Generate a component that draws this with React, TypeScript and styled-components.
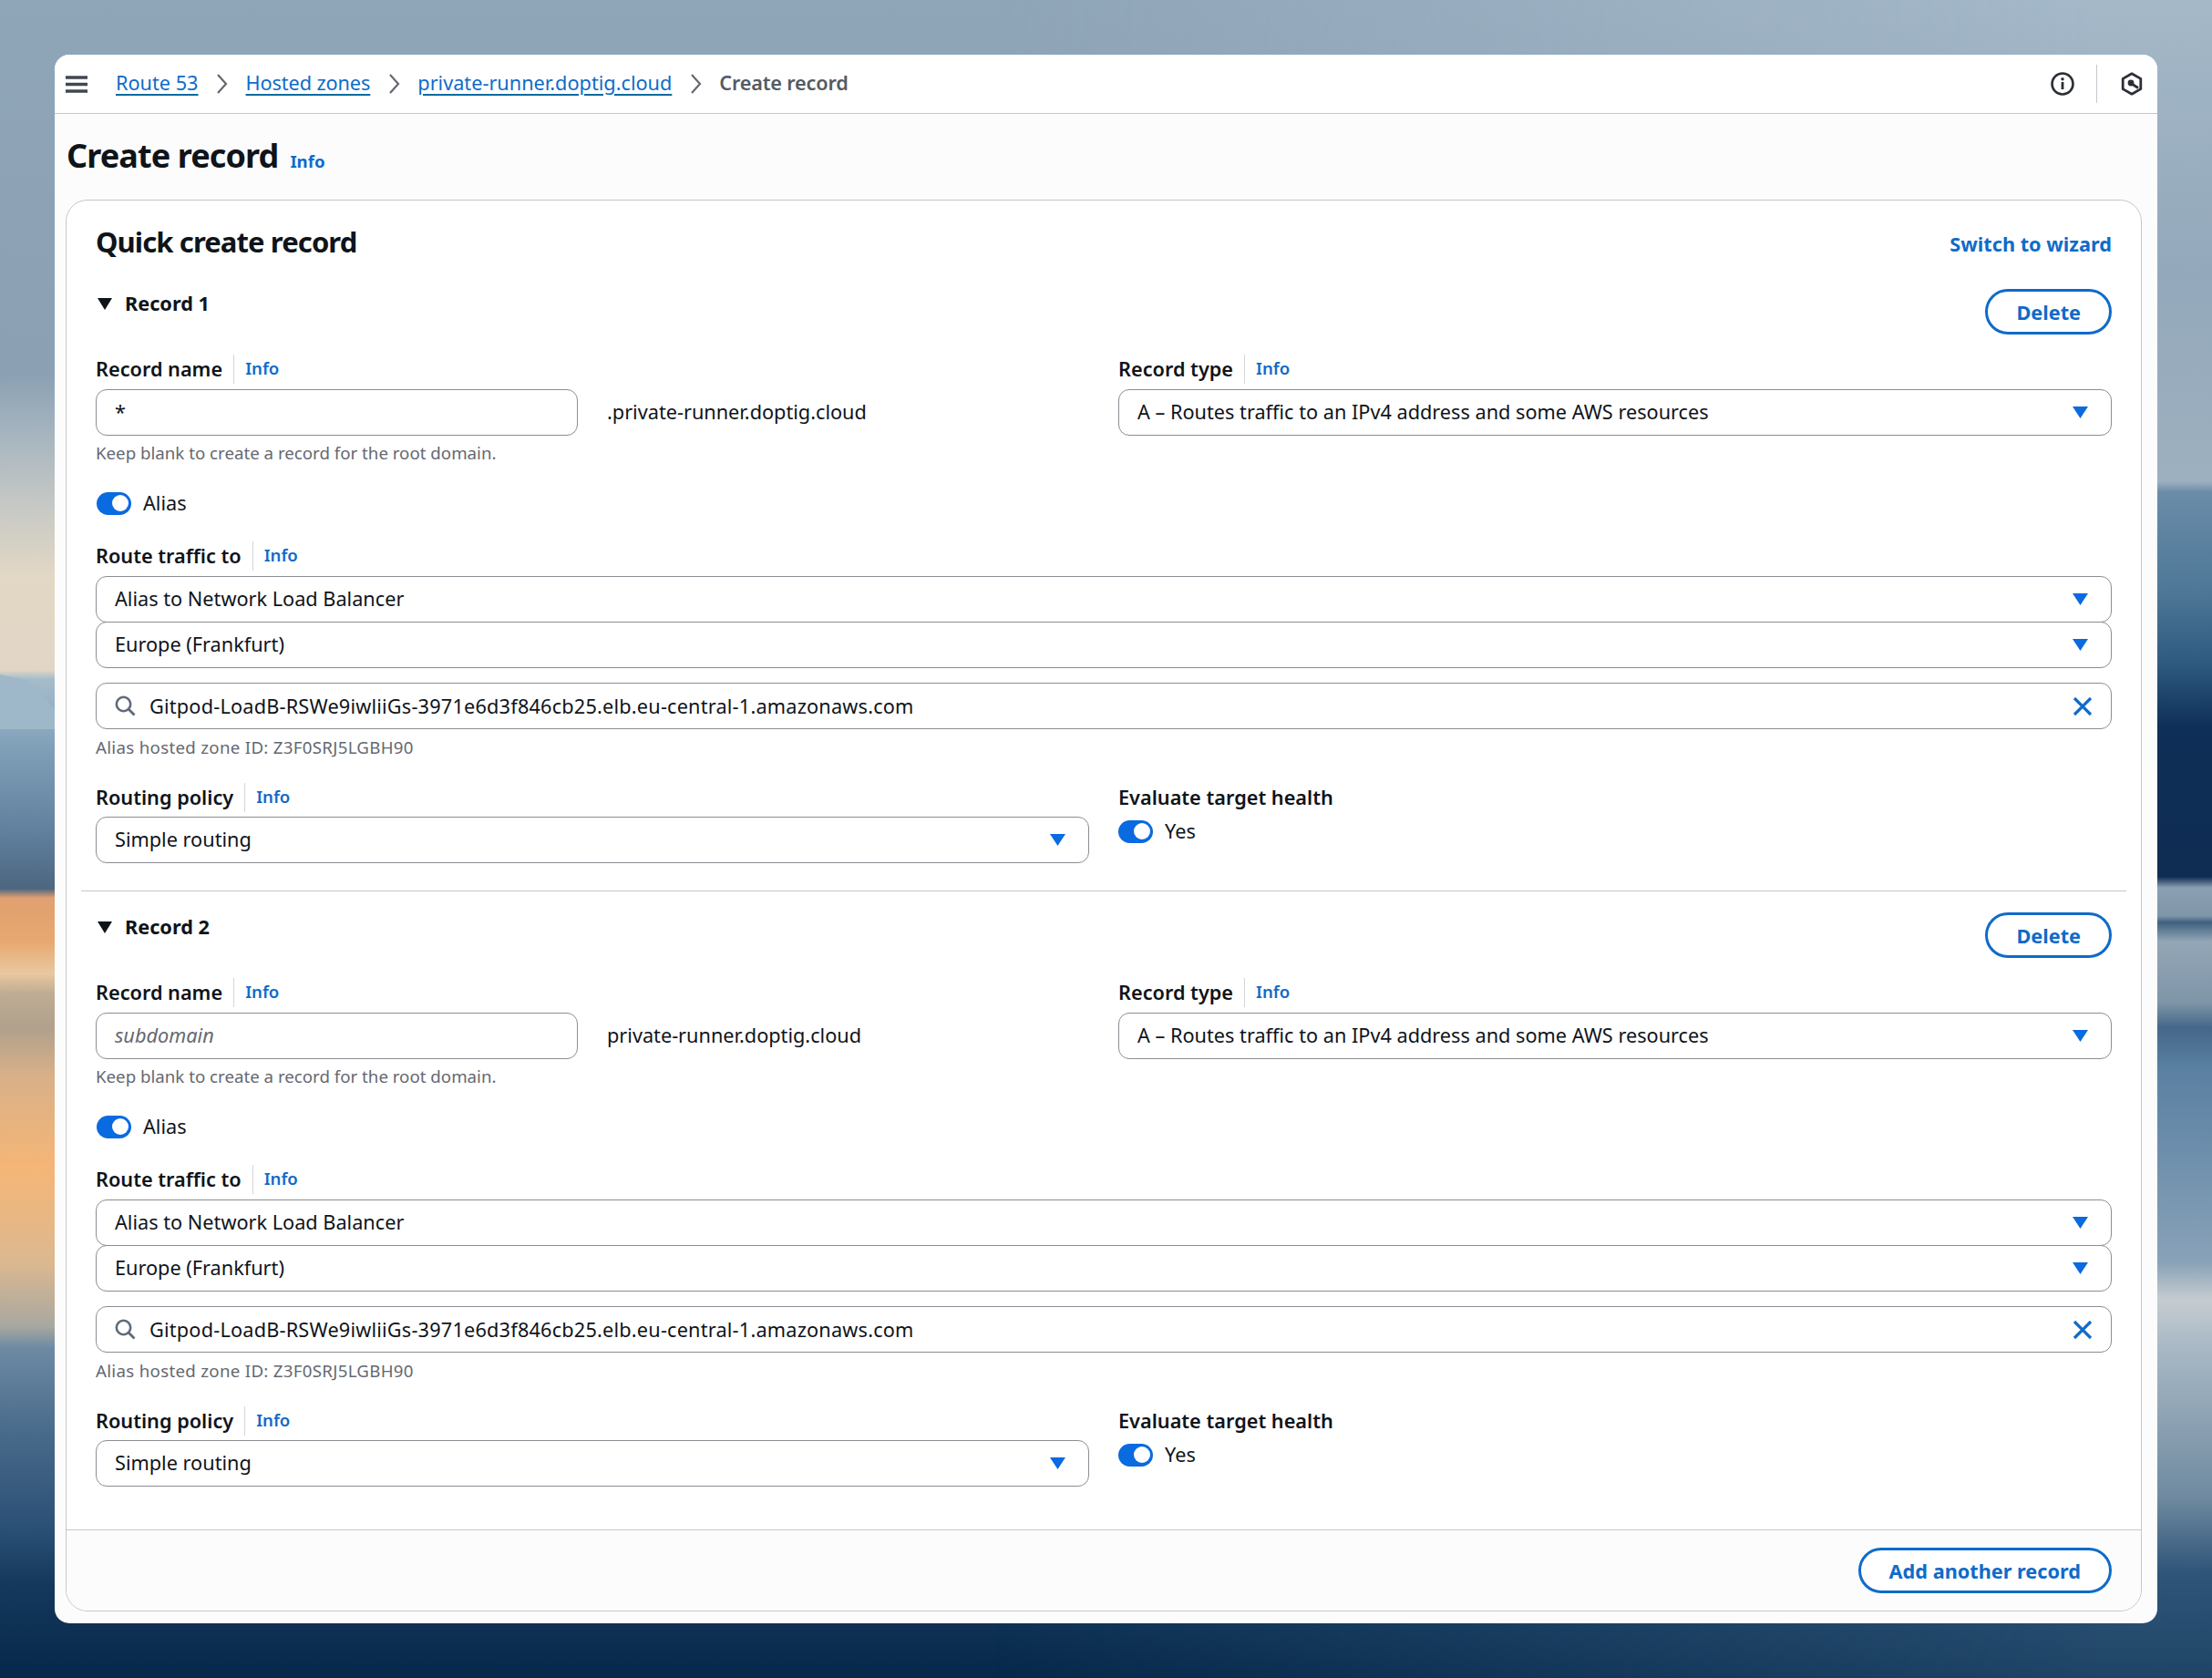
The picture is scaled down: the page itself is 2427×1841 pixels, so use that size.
import React from 'react';
import styled, { createGlobalStyle } from 'styled-components';

const GlobalStyle = createGlobalStyle`
  html, body { margin: 0; padding: 0; }
  body {
    font-family: "Noto Sans", "Open Sans", "Liberation Sans", sans-serif;
    color: #0f141a;
    background: #8fa5b8;
  }
`;

const Page = styled.div`
  position: relative;
  width: 2427px;
  height: 1841px;
  padding: 60px;
  box-sizing: border-box;
  overflow: hidden;
`;

const BackdropSvg = styled.svg`
  position: absolute;
  inset: 0;
`;

const Window = styled.div`
  position: relative;
  width: 2307px;
  height: 1721px;
  display: flex;
  flex-direction: column;
  background: #fcfcfd;
  border-radius: 16px;
  overflow: hidden;
`;

const TopBar = styled.header`
  height: 64px;
  flex: none;
  display: flex;
  align-items: center;
  padding: 0 16px 0 12px;
  background: #fff;
  border-bottom: 1px solid #c6c6cd;
`;

const Crumbs = styled.nav`
  display: flex;
  align-items: center;
  gap: 19.5px;
  margin-left: 31px;
  font-size: 21.7px;
  line-height: 28px;
`;

const CrumbLink = styled.a`
  color: #0f6bc9;
  text-decoration: underline;
  text-decoration-color: #0b6a9e;
  text-decoration-thickness: 2px;
  text-underline-offset: 4px;
  padding-bottom: 2px;
  letter-spacing: ${(p) => p.$track || 0}px;
`;

const CrumbCurrent = styled.span`
  color: #545b64;
  font-weight: 600;
  padding-bottom: 2px;
  letter-spacing: -0.2px;
`;

const ToolIcons = styled.div`
  margin-left: auto;
  display: flex;
  align-items: center;
`;

const ToolDivider = styled.span`
  width: 1px;
  height: 42px;
  margin: 0 26px 0 24px;
  background: #c6c6cd;
`;

const Body = styled.main`
  flex: 1;
  display: flex;
  flex-direction: column;
  padding: 0 17px 13px 12px;
`;

const TitleRow = styled.div`
  height: 94px;
  flex: none;
  display: flex;
  align-items: baseline;
  gap: 13px;
  padding: 23px 0 0 1px;
  box-sizing: border-box;
`;

const Title = styled.h1`
  margin: 0;
  font-size: 36px;
  line-height: 46px;
  font-weight: 700;
  letter-spacing: -0.9px;
`;

const InfoLink = styled.a`
  color: #0f6bc9;
  font-size: 18.6px;
  font-weight: 700;
`;

const Panel = styled.section`
  flex: 1;
  display: flex;
  flex-direction: column;
  background: #fff;
  border: 1px solid #c6c6cd;
  border-radius: 24px;
  overflow: hidden;
`;

const PanelBody = styled.div`
  flex: 1;
  padding: 27px 32px 0;
`;

const PanelHead = styled.div`
  display: flex;
  justify-content: space-between;
  align-items: center;
  height: 40px;
  margin-bottom: 30px;
`;

const PanelTitle = styled.h2`
  margin: 0;
  padding-bottom: 4px;
  font-size: 31px;
  line-height: 36px;
  font-weight: 700;
  letter-spacing: -0.9px;
`;

const TextAction = styled.a`
  color: #0f6bc9;
  font-size: 21.7px;
  font-weight: 700;
`;

const RecordHead = styled.div`
  display: flex;
  justify-content: space-between;
  align-items: flex-start;
  height: 50px;
`;

const RecordTitle = styled.div`
  display: flex;
  align-items: center;
  gap: 14px;
  padding-left: 2px;
  height: 32px;
  font-size: 21.7px;
  font-weight: 700;
`;

const RecordName = styled.span`
  padding-bottom: 2px;
`;

const OutlineButton = styled.button`
  height: 50px;
  padding: 0 ${(p) => p.$pad}px;
  box-sizing: border-box;
  background: #fff;
  border: 3px solid #0f6bc9;
  border-radius: 25px;
  color: #0f6bc9;
  font: 700 21.7px "Noto Sans", sans-serif;
`;

const Columns = styled.div`
  display: grid;
  grid-template-columns: 1090px 1090px;
  gap: 32px;
  margin-top: ${(p) => p.$top}px;
`;

const Column = styled.div`
  min-width: 0;
`;

const LabelRow = styled.div`
  display: flex;
  align-items: center;
  height: 32px;
  margin-top: ${(p) => p.$top || 0}px;
  margin-bottom: ${(p) => p.$bottom || 0}px;
`;

const LabelText = styled.span`
  font-size: 21.7px;
  font-weight: 600;
  padding-bottom: 2px;
`;

const LabelInfo = styled.a`
  margin-left: 12px;
  padding: 0 0 2px 12px;
  border-left: 1px solid #d5d5da;
  color: #0f6bc9;
  font-size: 18.6px;
  font-weight: 600;
  line-height: 30px;
`;

const Field = styled.div`
  display: flex;
  align-items: center;
  height: 51px;
  box-sizing: border-box;
  padding: 0 ${(p) => p.$right || 20}px 0 20px;
  margin-top: ${(p) => p.$top || 0}px;
  background: #fff;
  border: 1.5px solid #8c8c94;
  border-radius: 12px;
  font-size: 21.7px;
  white-space: nowrap;
`;

const FieldText = styled.span`
  padding-bottom: 2px;
`;

const NameRow = styled.div`
  display: flex;
  align-items: center;
  gap: 32px;
  font-size: 21.7px;
`;

const NameField = styled(Field)`
  width: 529px;
`;

const Placeholder = styled.span`
  color: #656871;
  font-style: italic;
`;

const SelectStack = styled.div`
  display: flex;
  flex-direction: column;
  & > * + * { margin-top: -1px; }
`;

const SelectArrow = styled.span`
  margin-left: auto;
  width: 17px;
  height: 13px;
  flex: none;
  background: #0a6ae0;
  clip-path: polygon(0 0, 100% 0, 50% 100%);
`;

const SearchValue = styled.span`
  margin-left: 15px;
  letter-spacing: 0.2px;
`;

const ClearIcon = styled.span`
  margin-left: auto;
  display: flex;
`;

const Hint = styled.div`
  font-size: 18.7px;
  line-height: 24px;
  padding-bottom: 2px;
  color: #656871;
  letter-spacing: ${(p) => p.$track || 0}px;
  margin-top: ${(p) => p.$top}px;
`;

const ToggleRow = styled.div`
  display: flex;
  align-items: center;
  gap: 13px;
  height: 26px;
  margin-top: ${(p) => p.$top}px;
  padding-left: ${(p) => p.$inset || 0}px;
  font-size: 21.7px;
`;

const Track = styled.span`
  display: flex;
  align-items: center;
  justify-content: flex-end;
  width: 38px;
  height: 25px;
  padding-right: 3px;
  box-sizing: border-box;
  flex: none;
  border-radius: 13px;
  background: #0a6ae0;
`;

const Knob = styled.span`
  width: 18px;
  height: 18px;
  border-radius: 50%;
  background: #fff;
`;

const Divider = styled.hr`
  margin: 30px -16px 23px;
  border: 0;
  border-top: 1px solid #c6c6cd;
`;

const PanelFooter = styled.div`
  display: flex;
  justify-content: flex-end;
  padding: 19px 32px 19px;
  border-top: 1px solid #c6c6cd;
  background: #fcfcfd;
`;

const leftStops: [number, string][] = [
  [0, '#8fa5b8'], [410, '#8ba0b2'], [470, '#a3b3bf'], [552, '#c5c8c5'], [634, '#e3d8c5'],
  [735, '#e1d6c6'], [745, '#a6bccb'], [822, '#7f9fb8'], [915, '#5f7f9c'], [975, '#4d6680'],
  [985, '#e0a070'], [1033, '#e8a870'], [1068, '#e8c8a0'], [1090, '#c0ac94'], [1127, '#b0a08c'],
  [1180, '#d8b088'], [1280, '#f5b676'], [1385, '#dcb890'], [1455, '#a8a8a0'], [1479, '#6d8aa3'],
  [1573, '#486a8a'], [1680, '#2a4f75'], [1737, '#14395c'], [1841, '#06284a'],
];

const rightStops: [number, string][] = [
  [0, '#a4b8c8'], [300, '#93a8ba'], [528, '#9db0c0'], [540, '#6a8ca8'], [645, '#4f7898'],
  [728, '#2e5a80'], [798, '#0e2f58'], [962, '#0f2c52'], [974, '#8ba0b2'], [1005, '#7f95a8'],
  [1012, '#3f6080'], [1033, '#93a6b6'], [1100, '#7f95a8'], [1127, '#45688a'], [1174, '#5a80a2'],
  [1385, '#88a2b8'], [1426, '#c5ccd0'], [1479, '#a8b8c5'], [1643, '#6f8aa0'], [1725, '#2f5578'],
  [1841, '#1e4466'],
];

const Backdrop = () => (
  <BackdropSvg width="2427" height="1841" viewBox="0 0 2427 1841">
    <defs>
      <linearGradient id="leftSky" x1="0" y1="0" x2="0" y2="1">
        {leftStops.map(([y, c]) => <stop key={y} offset={y / 1841} stopColor={c} />)}
      </linearGradient>
      <linearGradient id="rightSky" x1="0" y1="0" x2="0" y2="1">
        {rightStops.map(([y, c]) => <stop key={y} offset={y / 1841} stopColor={c} />)}
      </linearGradient>
      <linearGradient id="fade" x1="0" y1="0" x2="1" y2="0">
        <stop offset="0.45" stopColor="#000" />
        <stop offset="0.95" stopColor="#fff" />
      </linearGradient>
      <mask id="fadeMask">
        <rect width="2427" height="1841" fill="url(#fade)" />
      </mask>
    </defs>
    <rect width="2427" height="1841" fill="url(#leftSky)" />
    <rect width="2427" height="1841" fill="url(#rightSky)" mask="url(#fadeMask)" />
    <polygon points="0,740 30,746 62,780 62,800 0,800" fill="#9fb8c9" />
  </BackdropSvg>
);

const MenuIcon = () => (
  <svg width="24" height="19" viewBox="0 0 24 19">
    <path d="M0 2h24M0 9.5h24M0 17h24" stroke="#414750" strokeWidth="3.5" />
  </svg>
);

const Chevron = () => (
  <svg width="13" height="24" viewBox="0 0 13 24" fill="none">
    <path d="M2 2l9 10-9 10" stroke="#656871" strokeWidth="2.2" />
  </svg>
);

const InfoIcon = () => (
  <svg width="26" height="26" viewBox="0 0 26 26" fill="none">
    <circle cx="13" cy="13" r="11.5" stroke="#2b2f36" strokeWidth="2.6" />
    <circle cx="13" cy="7.8" r="1.7" fill="#2b2f36" />
    <path d="M13 11v8" stroke="#2b2f36" strokeWidth="2.8" />
  </svg>
);

const HexIcon = () => (
  <svg width="24" height="26" viewBox="0 0 24 26" fill="none">
    <path d="M12 1.8l9.8 5.6v11.2L12 24.2 2.2 18.6V7.4z" stroke="#2b2f36" strokeWidth="2.8" strokeLinejoin="round" />
    <circle cx="11" cy="12" r="3.4" fill="#2b2f36" />
    <path d="M12 13l7 4.5" stroke="#2b2f36" strokeWidth="2.8" />
  </svg>
);

const CaretDown = () => (
  <svg width="16" height="13" viewBox="0 0 16 13">
    <path d="M0 0h16L8 13z" fill="#0f141a" />
  </svg>
);

const SearchIcon = () => (
  <svg width="23" height="23" viewBox="0 0 23 23" fill="none">
    <circle cx="9.5" cy="9.5" r="7.7" stroke="#5f6b7a" strokeWidth="2.6" />
    <path d="M15 15l6.5 6.5" stroke="#5f6b7a" strokeWidth="2.8" />
  </svg>
);

const CloseIcon = () => (
  <svg width="22" height="22" viewBox="0 0 22 22" fill="none">
    <path d="M2 2l18 18M20 2L2 20" stroke="#0f6bc9" strokeWidth="3.2" />
  </svg>
);

const Label = ({ text, top, bottom }: { text: string; top?: number; bottom?: number }) => (
  <LabelRow $top={top} $bottom={bottom}>
    <LabelText>{text}</LabelText>
    <LabelInfo>Info</LabelInfo>
  </LabelRow>
);

const Select = ({ value, top }: { value: string; top?: number }) => (
  <Field $top={top} $right={25}>
    <FieldText>{value}</FieldText>
    <SelectArrow />
  </Field>
);

const Toggle = ({ text, top, inset }: { text: string; top: number; inset?: number }) => (
  <ToggleRow $top={top} $inset={inset}>
    <Track><Knob /></Track>
    <FieldText>{text}</FieldText>
  </ToggleRow>
);

const targetHost = 'Gitpod-LoadB-RSWe9iwliiGs-3971e6d3f846cb25.elb.eu-central-1.amazonaws.com';

const records = [
  { title: 'Record 1', name: '*', domain: '.private-runner.doptig.cloud' },
  { title: 'Record 2', name: '', domain: 'private-runner.doptig.cloud' },
];

const App: React.FC = () => {
  return (
    <>
      <GlobalStyle />
      <Page>
        <Backdrop />
        <Window>
          <TopBar>
            <MenuIcon />
            <Crumbs>
              <CrumbLink>Route 53</CrumbLink>
              <Chevron />
              <CrumbLink $track={-0.1}>Hosted zones</CrumbLink>
              <Chevron />
              <CrumbLink>private-runner.doptig.cloud</CrumbLink>
              <Chevron />
              <CrumbCurrent>Create record</CrumbCurrent>
            </Crumbs>
            <ToolIcons>
              <InfoIcon />
              <ToolDivider />
              <HexIcon />
            </ToolIcons>
          </TopBar>
          <Body>
            <TitleRow>
              <Title>Create record</Title>
              <InfoLink>Info</InfoLink>
            </TitleRow>
            <Panel>
              <PanelBody>
                <PanelHead>
                  <PanelTitle>Quick create record</PanelTitle>
                  <TextAction>Switch to wizard</TextAction>
                </PanelHead>
                {records.map((r, i) => (
                  <div key={r.title}>
                    {i > 0 && <Divider />}
                    <RecordHead>
                      <RecordTitle>
                        <CaretDown />
                        <RecordName>{r.title}</RecordName>
                      </RecordTitle>
                      <OutlineButton $pad={31}>Delete</OutlineButton>
                    </RecordHead>
                    <Columns $top={22}>
                      <Column>
                        <Label text="Record name" bottom={6} />
                        <NameRow>
                          <NameField>
                            <FieldText>{r.name || <Placeholder>subdomain</Placeholder>}</FieldText>
                          </NameField>
                          <FieldText>{r.domain}</FieldText>
                        </NameRow>
                      </Column>
                      <Column>
                        <Label text="Record type" bottom={6} />
                        <Select value="A – Routes traffic to an IPv4 address and some AWS resources" />
                      </Column>
                    </Columns>
                    <Hint $top={7}>Keep blank to create a record for the root domain.</Hint>
                    <Toggle text="Alias" top={28} inset={1} />
                    <Label text="Route traffic to" top={29} bottom={6} />
                    <SelectStack>
                      <Select value="Alias to Network Load Balancer" />
                      <Select value="Europe (Frankfurt)" />
                    </SelectStack>
                    <Field $top={16}>
                      <SearchIcon />
                      <SearchValue>{targetHost}</SearchValue>
                      <ClearIcon><CloseIcon /></ClearIcon>
                    </Field>
                    <Hint $top={8} $track={0.3}>Alias hosted zone ID: Z3F0SRJ5LGBH90</Hint>
                    <Columns $top={25}>
                      <Column>
                        <Label text="Routing policy" bottom={5} />
                        <Select value="Simple routing" />
                      </Column>
                      <Column>
                        <LabelRow><LabelText>Evaluate target health</LabelText></LabelRow>
                        <Toggle text="Yes" top={8} />
                      </Column>
                    </Columns>
                  </div>
                ))}
              </PanelBody>
              <PanelFooter>
                <OutlineButton $pad={31}>Add another record</OutlineButton>
              </PanelFooter>
            </Panel>
          </Body>
        </Window>
      </Page>
    </>
  );
};

export default App;
